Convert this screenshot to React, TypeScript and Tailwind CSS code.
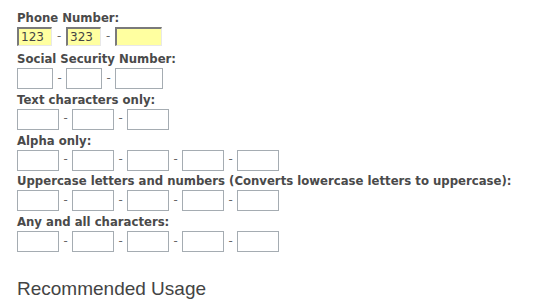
const phone = [35, 35, 47];

function Field({ w, value, yellow }: { w: number; value?: string; yellow?: boolean }) {
    return (
        <input
            readOnly
            value={value ?? ""}
            style={{ width: w }}
            className={
                yellow
                    ? "h-[19px] bg-[#ffffa0] border-t-2 border-l-2 border-r border-b border-t-[#7a7a7a] border-l-[#7a7a7a] border-r-[#e8e8e8] border-b-[#e8e8e8] px-[2px] text-[12px] font-normal text-[#444] outline-none"
                    : "h-[21px] bg-white border border-[#a5acb2] px-[2px] text-[12px] font-normal text-[#444] outline-none"
            }
        />
    );
}

function Row({ widths, values, yellow, gap }: { widths: number[]; values?: string[]; yellow?: boolean; gap: "w-[13px]" | "w-[14px]" }) {
    return (
        <div className="flex items-center">
            {widths.map((w, i) => (
                <div key={i} className="flex items-center">
                    {i > 0 && <span className={`${gap} text-center font-normal text-[#666]`}>-</span>}
                    <Field w={w} value={values?.[i]} yellow={yellow} />
                </div>
            ))}
        </div>
    );
}

const blocks: { label: string; widths: number[] }[] = [
    { label: "Social Security Number:", widths: [36, 36, 48] },
    { label: "Text characters only:", widths: [42, 42, 42] },
    { label: "Alpha only:", widths: [42, 42, 42, 42, 42] },
    { label: "Uppercase letters and numbers (Converts lowercase letters to uppercase):", widths: [42, 42, 42, 42, 42] },
    { label: "Any and all characters:", widths: [42, 42, 42, 42, 42] },
];

export default function App() {
    return (
        <main className="w-[560px] h-[300px] overflow-hidden bg-white pl-[17px] pt-[10px] font-['DejaVu_Sans',sans-serif] text-[11.7px] font-bold text-[#4a4a4a]">
            <div className="mb-[5px]">
                <div className="leading-[17px]">Phone Number:</div>
                <Row widths={phone} values={["123", "323", ""]} yellow gap="w-[14px]" />
            </div>
            {blocks.map((b) => (
                <div key={b.label} className="mb-[2.75px]">
                    <div className="leading-[17px]">{b.label}</div>
                    <Row widths={b.widths} gap="w-[13px]" />
                </div>
            ))}
            <h2 className="mt-[26px] font-['Liberation_Sans',Arial,sans-serif] text-[19px] font-normal leading-[22px] text-[#444]">
                Recommended Usage
            </h2>
        </main>
    );
}
